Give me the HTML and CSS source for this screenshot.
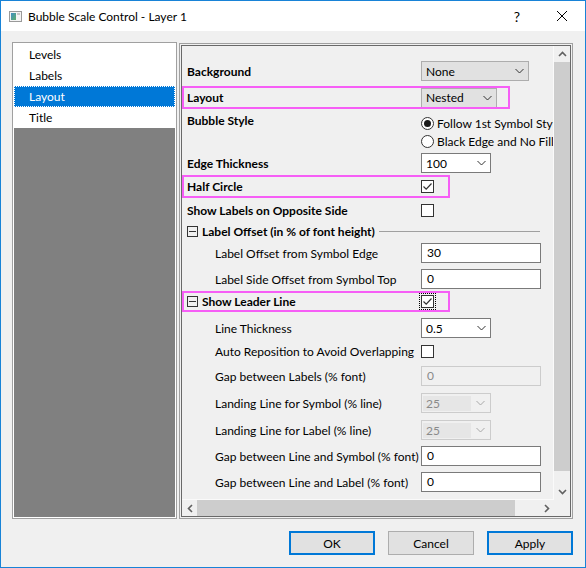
FILE: index.html
```html
<!DOCTYPE html>
<html lang="en">
<head>
<meta charset="utf-8">
<title>Bubble Scale Control - Layer 1</title>
<link rel="stylesheet" href="styles.css">
</head>
<body>
<div class="window">
  <div class="titlebar">
    <svg class="app-icon" width="13" height="13" viewBox="0 0 13 13">
      <defs>
        <linearGradient id="pic" x1="0" y1="0" x2="1" y2="1">
          <stop offset="0" stop-color="#3f8fc4"/>
          <stop offset="1" stop-color="#5fae6a"/>
        </linearGradient>
      </defs>
      <rect x="0.5" y="1.5" width="12" height="10" fill="#f4f4f4" stroke="#9a9a9a"/>
      <rect x="2" y="3" width="5" height="7" fill="url(#pic)"/>
      <rect x="8" y="3" width="3" height="2" fill="#c8c8c8"/>
    </svg>
    <span class="title">Bubble Scale Control - Layer 1</span>
    <span class="help">?</span>
    <svg class="close" width="20" height="20" viewBox="0 0 20 20">
      <path d="M5 5 L15 15 M15 5 L5 15" stroke="#000" stroke-width="1"/>
    </svg>
  </div>

  <div class="main">
    <div class="nav">
      <div class="nav-item">Levels</div>
      <div class="nav-item">Labels</div>
      <div class="nav-item active">Layout</div>
      <div class="nav-item">Title</div>
      <div class="nav-fill"></div>
    </div>

    <div class="sheet">
      <div class="sheet-inner">
        <div class="sheet-body">
          <div class="content">

            <div class="row m15">
              <div class="lbl b">Background</div>
              <div class="combo w108"><span class="val">None</span>
                <svg class="chev" width="9" height="6" viewBox="0 0 9 6"><path d="M0.5 1 L4.5 5 L8.5 1" fill="none" stroke="#333"/></svg>
              </div>
            </div>

            <div class="row tall mark mark-wide m5">
              <div class="lbl b">Layout</div>
              <div class="combo w76"><span class="val">Nested</span>
                <svg class="chev" width="9" height="6" viewBox="0 0 9 6"><path d="M0.5 1 L4.5 5 L8.5 1" fill="none" stroke="#333"/></svg>
              </div>
            </div>

            <div class="row top m3">
              <div class="lbl b pad1">Bubble Style</div>
              <div class="radios">
                <div class="radio"><span class="dot on"></span>Follow 1st Symbol Style</div>
                <div class="radio"><span class="dot"></span>Black Edge and No Fill</div>
              </div>
            </div>

            <div class="row m3">
              <div class="lbl b">Edge Thickness</div>
              <div class="combo edit w70"><span class="val">100</span>
                <svg class="chev" width="9" height="6" viewBox="0 0 9 6"><path d="M0.5 1 L4.5 5 L8.5 1" fill="none" stroke="#333"/></svg>
              </div>
            </div>

            <div class="row tall mark m2">
              <div class="lbl b">Half Circle</div>
              <div class="check">
                <svg width="11" height="11" viewBox="0 0 11 11"><path d="M1.5 5.5 L4.2 8.2 L9.5 2.5" fill="none" stroke="#333" stroke-width="1.2"/></svg>
              </div>
            </div>

            <div class="row m2">
              <div class="lbl b">Show Labels on Opposite Side</div>
              <div class="check"></div>
            </div>

            <div class="row m1">
              <span class="toggle"></span>
              <span class="b">Label Offset (in % of font height)</span>
              <span class="rule"></span>
            </div>

            <div class="row sub m2">
              <div class="lbl">Label Offset from Symbol Edge</div>
              <div class="field">30</div>
            </div>

            <div class="row sub m6">
              <div class="lbl">Label Side Offset from Symbol Top</div>
              <div class="field">0</div>
            </div>

            <div class="row mid mark m2">
              <div class="lbl grp"><span class="toggle"></span><span class="b">Show Leader Line</span></div>
              <div class="check focus">
                <svg width="11" height="11" viewBox="0 0 11 11"><path d="M1.5 5.5 L4.2 8.2 L9.5 2.5" fill="none" stroke="#333" stroke-width="1.2"/></svg>
              </div>
            </div>

            <div class="row sub m6">
              <div class="lbl">Line Thickness</div>
              <div class="combo edit w70"><span class="val">0.5</span>
                <svg class="chev" width="9" height="6" viewBox="0 0 9 6"><path d="M0.5 1 L4.5 5 L8.5 1" fill="none" stroke="#333"/></svg>
              </div>
            </div>

            <div class="row sub m3">
              <div class="lbl">Auto Reposition to Avoid Overlapping</div>
              <div class="check"></div>
            </div>

            <div class="row sub m5">
              <div class="lbl">Gap between Labels (% font)</div>
              <div class="field off">0</div>
            </div>

            <div class="row sub m7">
              <div class="lbl">Landing Line for Symbol (% line)</div>
              <div class="combo off w70"><span class="val">25</span>
                <svg class="chev" width="9" height="6" viewBox="0 0 9 6"><path d="M0.5 1 L4.5 5 L8.5 1" fill="none" stroke="#a8a8a8"/></svg>
              </div>
            </div>

            <div class="row sub m7">
              <div class="lbl">Landing Line for Label (% line)</div>
              <div class="combo off w70"><span class="val">25</span>
                <svg class="chev" width="9" height="6" viewBox="0 0 9 6"><path d="M0.5 1 L4.5 5 L8.5 1" fill="none" stroke="#a8a8a8"/></svg>
              </div>
            </div>

            <div class="row sub m6">
              <div class="lbl">Gap between Line and Symbol (% font)</div>
              <div class="field">0</div>
            </div>

            <div class="row sub m6">
              <div class="lbl">Gap between Line and Label (% font)</div>
              <div class="field">0</div>
            </div>

          </div>
          <div class="vscroll">
            <div class="arrow">
              <svg width="9" height="6" viewBox="0 0 9 6"><path d="M1 5 L4.5 1.5 L8 5" fill="none" stroke="#606060" stroke-width="1.6"/></svg>
            </div>
            <div class="thumb"></div>
            <div class="track"></div>
            <div class="arrow">
              <svg width="9" height="6" viewBox="0 0 9 6"><path d="M1 1 L4.5 4.5 L8 1" fill="none" stroke="#606060" stroke-width="1.6"/></svg>
            </div>
          </div>
        </div>
        <div class="hscroll-row">
          <div class="hscroll">
            <div class="arrow">
              <svg width="6" height="9" viewBox="0 0 6 9"><path d="M5 1 L1.5 4.5 L5 8" fill="none" stroke="#606060" stroke-width="1.6"/></svg>
            </div>
            <div class="thumb"></div>
            <div class="track"></div>
            <div class="arrow">
              <svg width="6" height="9" viewBox="0 0 6 9"><path d="M1 1 L4.5 4.5 L1 8" fill="none" stroke="#606060" stroke-width="1.6"/></svg>
            </div>
          </div>
          <div class="corner"></div>
        </div>
      </div>
    </div>
  </div>

  <div class="buttons">
    <div class="btn default">OK</div>
    <div class="btn">Cancel</div>
    <div class="btn default">Apply</div>
  </div>
</div>
</body>
</html>
```

FILE: styles.css
```css
* { box-sizing: border-box; }

body {
    margin: 0;
    font-family: Lato, "Liberation Sans", sans-serif;
    font-size: 12px;
    color: #000;
}

.window {
    width: 586px;
    height: 568px;
    border: 1px solid #1883d7;
    background: #f0f0f0;
    display: flex;
    flex-direction: column;
}

/* title bar */
.titlebar {
    flex: none;
    height: 30px;
    background: #fff;
    display: flex;
    align-items: center;
    padding-left: 8px;
}
.app-icon { margin-right: 6px; }
.title { flex: 1; }
.help {
    width: 20px;
    margin-right: 25px;
    text-align: center;
    font-size: 14px;
}
.close { margin-right: 13px; }

/* left list + property sheet */
.main {
    flex: none;
    height: 488px;
    display: flex;
    align-items: flex-start;
    gap: 2px;
    padding: 11px 0 0 11px;
}

.nav {
    width: 165px;
    height: 477px;
    border: 1px solid #a0a0a0;
    padding: 1px;
    background: #fff;
    display: flex;
    flex-direction: column;
}
.nav-item {
    height: 21px;
    line-height: 21px;
    padding-left: 15px;
}
.nav-item.active {
    background: #0078d7;
    color: #fff;
    outline: 1px dotted #fff;
    outline-offset: -1px;
}
.nav-fill { flex: 1; background: #808080; }

.sheet {
    width: 394px;
    height: 476px;
    margin-top: 1px;
    border: 1px solid #a0a0a0;
    padding: 1px;
}
.sheet-inner {
    height: 100%;
    border: 1px solid #696969;
    display: flex;
    flex-direction: column;
}
.sheet-body {
    height: 454px;
    display: flex;
}

.content {
    flex: 1;
    overflow: hidden;
    padding-left: 5px;
    border-right: 1px solid #fafafa;
    border-bottom: 1px solid #fafafa;
}

.row {
    position: relative;
    display: flex;
    align-items: center;
    height: 20px;
    white-space: nowrap;
}
.row.tall { height: 23px; }
.row.mid { height: 21px; }
.row.top { align-items: flex-start; height: 38px; }

.m1 { margin-top: 1px; }
.m2 { margin-top: 2px; }
.m3 { margin-top: 3px; }
.m5 { margin-top: 5px; }
.m6 { margin-top: 6px; }
.m7 { margin-top: 7px; }
.m15 { margin-top: 15px; }

.lbl { flex: none; width: 234px; }
.sub .lbl { padding-left: 28px; }
.b { font-weight: bold; }
.pad1 { padding-top: 1px; line-height: 16px; }
.grp { display: flex; align-items: center; }

/* highlight boxes drawn over the rows */
.mark::after {
    content: "";
    position: absolute;
    top: 0;
    bottom: 0;
    left: -5px;
    width: 264px;
    border: 2px solid #f65ef6;
}
.mark-wide::after { width: 324px; }

/* controls */
.combo {
    display: flex;
    align-items: center;
    height: 20px;
    border: 1px solid #adadad;
    background: #e1e1e1;
    padding: 0 4px 0 4px;
}
.combo .val { flex: 1; }
.combo.edit { background: #fff; border-color: #7a7a7a; }
.combo.off {
    background: #f0f0f0;
    border-color: #cccccc;
    padding: 0 5px 0 1px;
    color: #8a8a8a;
}
.combo.off .val {
    flex: none;
    width: 48px;
    height: 15px;
    line-height: 15px;
    padding-left: 3px;
    background: #e6e6e6;
}
.combo.off .chev { margin-left: auto; }

.w108 { width: 108px; }
.w76 { width: 76px; }
.w70 { width: 70px; }

.field {
    width: 120px;
    height: 20px;
    line-height: 18px;
    border: 1px solid #7a7a7a;
    background: #fff;
    padding-left: 5px;
}
.field.off {
    border-color: #cccccc;
    background: #f0f0f0;
    color: #8a8a8a;
}

.check {
    width: 13px;
    height: 13px;
    border: 1px solid #333;
    background: #fff;
    display: flex;
    align-items: center;
    justify-content: center;
}
.check.focus {
    outline: 1px dotted #000;
    outline-offset: 1px;
}

.radios { padding-top: 2px; }
.radio {
    display: flex;
    align-items: center;
    gap: 3px;
    height: 18px;
}
.dot {
    width: 13px;
    height: 13px;
    border: 1px solid #333;
    border-radius: 50%;
    background: #fff;
    display: flex;
    align-items: center;
    justify-content: center;
}
.dot.on::before {
    content: "";
    width: 7px;
    height: 7px;
    border-radius: 50%;
    background: #1a1a1a;
}

.toggle {
    flex: none;
    width: 11px;
    height: 11px;
    border: 1px solid #333;
    margin-right: 4px;
    display: flex;
    align-items: center;
    justify-content: center;
}
.toggle::before {
    content: "";
    width: 7px;
    height: 1px;
    background: #333;
}
.rule {
    flex: 1;
    height: 1px;
    background: #a0a0a0;
    margin: 0 13px 0 4px;
}

/* scroll bars */
.vscroll {
    width: 16px;
    display: flex;
    flex-direction: column;
}
.vscroll .arrow { height: 16px; }
.vscroll .thumb { height: 409px; background: #cdcdcd; }
.vscroll .track { flex: 1; }

.arrow {
    flex: none;
    display: flex;
    align-items: center;
    justify-content: center;
}

.hscroll-row { height: 16px; display: flex; }
.hscroll { flex: 1; display: flex; }
.hscroll .arrow { width: 15px; }
.hscroll .thumb { width: 318px; background: #cdcdcd; }
.hscroll .track { flex: 1; }
.corner { width: 16px; }

/* dialog buttons */
.buttons {
    display: flex;
    justify-content: flex-end;
    gap: 13px;
    padding: 12px 12px 0 0;
}
.btn {
    width: 86px;
    height: 24px;
    border: 1px solid #adadad;
    background: #e1e1e1;
    display: flex;
    align-items: center;
    justify-content: center;
}
.btn.default { border: 2px solid #0078d7; }
```
